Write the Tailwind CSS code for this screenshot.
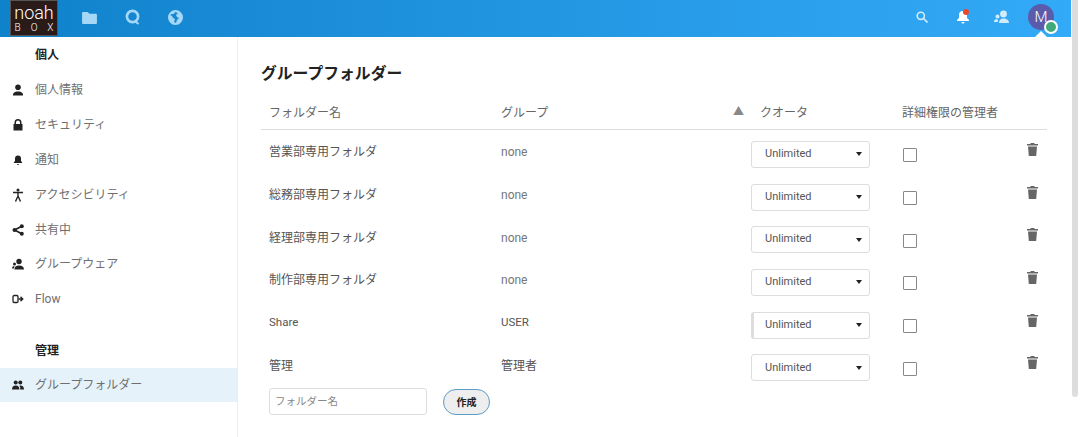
<!DOCTYPE html>
<html lang="ja">
<head>
  <meta charset="UTF-8" />
  <title>グループフォルダー</title>
  <script src="https://cdn.jsdelivr.net/npm/@tailwindcss/browser@4"></script>
</head>
<body class="w-[1080px] h-[437px] overflow-hidden flex bg-white font-['Roboto','Noto_Sans_CJK_JP',sans-serif] text-[12px] text-[#555]">

  <div class="w-[1071px] shrink-0">
    <!-- Header -->
    <header class="h-[37px] flex justify-between bg-gradient-to-r from-[#0f82cc] to-[#33aaf7]">
      <div class="flex items-center">
        <div class="ml-[10px] w-[48px] h-[36px] self-start bg-[#2a1a18] border border-[#555] flex flex-col items-center text-white">
          <span class="h-[16px] mt-[4px] text-[18px] leading-[16px] font-light">noah</span>
          <span class="h-[10px] mt-[2px] ml-[10px] text-[10px] leading-[10px] tracking-[10px] font-light">BOX</span>
        </div>
        <div class="flex items-center gap-[28px] ml-[24px] pb-[3px] text-[#a5d8f7]">
          <svg width="15" height="13" viewBox="0 0 16 14" fill="currentColor"><path d="M1 1h5l2 2h7a1 1 0 0 1 1 1v9a1 1 0 0 1-1 1H1a1 1 0 0 1-1-1V2a1 1 0 0 1 1-1z"/></svg>
          <svg width="15" height="16" viewBox="0 0 15 16" fill="none" stroke="currentColor" stroke-width="2.6"><circle cx="7.5" cy="7.5" r="5.6"/><path d="M10.5 12.5l3 2.5" stroke-width="2"/></svg>
          <svg width="15" height="15" viewBox="0 0 15 15" fill="currentColor"><path fill-rule="evenodd" d="M7.5 0a7.5 7.5 0 1 1 0 15a7.5 7.5 0 0 1 0-15zM2 5l2 1 1 2 2 1-1 3 2 1 1-3 2-2-2-1-1-2 2-2-3-1-1 2-2 0z"/></svg>
        </div>
      </div>
      <div class="flex items-center pb-[3px] text-[#d3ecfc]">
        <svg class="mr-[29px]" width="12" height="12" viewBox="0 0 12 12" fill="none" stroke="currentColor" stroke-width="1.6"><circle cx="4.8" cy="4.8" r="3.6"/><path d="M7.5 7.5L11.5 11.5"/></svg>
        <div class="relative mr-[25px] text-white">
          <svg class="block" width="12" height="14" viewBox="0 0 12 14" fill="currentColor"><path d="M6 1a4 4 0 0 1 4 4v3l2 2v1H0v-1l2-2V5a4 4 0 0 1 4-4zM4.5 12h3a1.5 1.5 0 0 1-3 0z"/></svg>
          <span class="absolute -top-[1px] left-[6px] w-[6px] h-[6px] rounded-full bg-[#e9482c]"></span>
        </div>
        <svg class="mr-[19px]" width="15" height="14" viewBox="0 0 15 14" fill="currentColor"><circle cx="9.5" cy="4" r="3.4"/><path d="M5 13c0-3 1.5-4.5 4.5-4.5S15 10 15 13z"/><circle cx="3.5" cy="6.5" r="2"/><path d="M0 12c0-2 1-3 3.5-3l.5 3z"/></svg>
        <div class="relative mr-[17px] w-[26px] h-[26px] rounded-full bg-[#5b5bab] flex items-center justify-center text-white text-[15px] font-light">
          M
          <span class="absolute -right-[4px] -bottom-[4px] w-[14px] h-[14px] rounded-full bg-[#41a97a] border-2 border-white"></span>
          <span class="absolute left-[7px] -bottom-[7px] w-0 h-0 border-x-[6px] border-x-transparent border-b-[6px] border-b-white"></span>
        </div>
      </div>
    </header>

    <div class="flex h-[400px]">
      <!-- Sidebar -->
      <aside class="w-[238px] shrink-0 border-r border-[#eee] text-[#6f6f6f]">
        <h3 class="h-[36px] pl-[35px] pt-[9px] font-bold text-[#222]">個人</h3>
        <nav>
          <a class="h-[34.8px] flex items-center">
            <svg class="ml-[12px] w-[12px]" viewBox="0 0 12 12" fill="#222" height="12"><circle cx="6" cy="3.2" r="2.8"/><path d="M1 11.5V10c1-2 3-2.5 5-2.5s4 .5 5 2.5v1.5z"/></svg>
            <span class="ml-[11px]">個人情報</span>
          </a>
          <a class="h-[34.8px] flex items-center">
            <svg class="ml-[12px] w-[12px]" viewBox="0 0 12 12" fill="#222" height="12"><path d="M1.5 5h1V3.5a3.5 3.5 0 0 1 7 0V5h1v6.5h-9zM4 5h4V3.5a2 2 0 0 0-4 0z"/></svg>
            <span class="ml-[11px]">セキュリティ</span>
          </a>
          <a class="h-[34.8px] flex items-center">
            <svg class="ml-[12px] w-[12px]" viewBox="0 0 12 12" fill="#222" height="12"><path d="M6 1.500a3 3 0 0 1 3 3V7l1.200 1.500v.5H1.800v-.5L3 7V4.500a3 3 0 0 1 3-3zM5 10h2a1 1 0 0 1-2 0z"/></svg>
            <span class="ml-[11px]">通知</span>
          </a>
          <a class="h-[34.8px] flex items-center">
            <svg class="ml-[12px] w-[12px]" viewBox="0 0 12 14" fill="none" stroke="#222" stroke-width="1.4" height="14"><circle cx="6" cy="2" r="1.5" fill="#222" stroke="none"/><path d="M1 4.500h10M6 4.500v4M6 8l-2.500 5.500M6 8l2.500 5.500"/></svg>
            <span class="ml-[11px]">アクセシビリティ</span>
          </a>
          <a class="h-[34.8px] flex items-center">
            <svg class="ml-[12px] w-[12px]" viewBox="0 0 12 12" fill="#222" stroke="#222" height="12"><circle cx="2.500" cy="6" r="2" stroke="none"/><circle cx="9.800" cy="2.200" r="2" stroke="none"/><circle cx="9.800" cy="9.800" r="2" stroke="none"/><path d="M9.800 2.200L2.500 6l7.300 3.800" fill="none" stroke-width="1.700"/></svg>
            <span class="ml-[11px]">共有中</span>
          </a>
          <a class="h-[34.8px] flex items-center">
            <svg class="ml-[12px] w-[12px]" viewBox="0 0 12 12" fill="#222" height="12"><circle cx="7" cy="3.500" r="2.700"/><path d="M2.500 11.500c0-2.500 1.500-4 4.500-4s5 1.500 5 4z"/><circle cx="2.500" cy="6" r="1.500"/><path d="M0 10.500c0-1.500.7-2.500 2.500-2.500l-.5 2.500z"/></svg>
            <span class="ml-[11px]">グループウェア</span>
          </a>
          <a class="h-[34.8px] flex items-center">
            <svg class="ml-[12px] w-[12px]" viewBox="0 0 12 10" fill="none" stroke="#222" stroke-width="1.300" height="10"><rect x="1" y="1.500" width="5" height="7" rx="1.200"/><path d="M6.500 5h4M8.500 2.800L10.800 5 8.500 7.200"/></svg>
            <span class="ml-[11px]">Flow</span>
          </a>
        </nav>
        <h3 class="h-[35px] mt-[16.4px] pl-[35px] pt-[9px] font-bold text-[#222]">管理</h3>
        <a class="h-[34px] flex items-center bg-[#e5f2fa]">
          <svg class="ml-[12px] w-[12px]" viewBox="0 0 12 10" fill="#222" height="10"><circle cx="3.700" cy="2.500" r="2"/><circle cx="8.300" cy="2.500" r="2"/><path d="M0 9.500c0-2.500 1.300-4 3.700-4s3.700 1.500 3.700 4z"/><path d="M8 9.500h4c0-2.500-1.300-4-3.700-4l-1 .3c1 .8 1.300 2 .7 3.700z"/></svg>
          <span class="ml-[11px]">グループフォルダー</span>
        </a>
      </aside>

      <!-- Main -->
      <main class="flex-1 pl-[23px] pr-[24px]">
        <h2 class="pt-[25px] h-[59px] font-bold text-[15.8px] text-[#222]">グループフォルダー</h2>
        <div class="grid grid-cols-[232px_240px_19px_150px_1fr] h-[34px] items-center border-b border-[#ddd] text-[#666]">
          <span class="pl-[8px]">フォルダー名</span>
          <span class="pl-[8px]">グループ</span>
          <span class="text-[#888] text-[11px]">▲</span>
          <span class="pl-[8px]">クオータ</span>
          <span>詳細権限の管理者</span>
        </div>

        <div class="pt-[3px]">
          <div class="grid grid-cols-[232px_258px_152px_124px_1fr] items-center h-[42.7px]">
            <span class="pl-[8px] -mt-[4px] text-[#555]">営業部専用フォルダ</span>
            <span class="pl-[8px] -mt-[4px] text-[#777]">none</span>
            <div class="w-[119px] h-[27px] pl-[13px] pr-[7px] flex items-center justify-between bg-white border border-[#ddd] rounded-[3px] text-[11px]">Unlimited<span class="border-x-[3.5px] border-x-transparent border-t-[4px] border-t-[#222]"></span></div>
            <span class="w-[14px] h-[14px] mt-[2px] border border-[#888] rounded-[1px]"></span>
            <svg class="-mt-[10px]" width="11" height="13" viewBox="0 0 11 13" fill="#666"><path d="M3.500 1V0h4v1H11v1.500H0V1zM1 3.500h9l-.8 9.500H1.800z"/></svg>
          </div>
          <div class="grid grid-cols-[232px_258px_152px_124px_1fr] items-center h-[42.7px]">
            <span class="pl-[8px] -mt-[4px] text-[#555]">総務部専用フォルダ</span>
            <span class="pl-[8px] -mt-[4px] text-[#777]">none</span>
            <div class="w-[119px] h-[27px] pl-[13px] pr-[7px] flex items-center justify-between bg-white border border-[#ddd] rounded-[3px] text-[11px]">Unlimited<span class="border-x-[3.5px] border-x-transparent border-t-[4px] border-t-[#222]"></span></div>
            <span class="w-[14px] h-[14px] mt-[2px] border border-[#888] rounded-[1px]"></span>
            <svg class="-mt-[10px]" width="11" height="13" viewBox="0 0 11 13" fill="#666"><path d="M3.500 1V0h4v1H11v1.500H0V1zM1 3.500h9l-.8 9.500H1.800z"/></svg>
          </div>
          <div class="grid grid-cols-[232px_258px_152px_124px_1fr] items-center h-[42.7px]">
            <span class="pl-[8px] -mt-[4px] text-[#555]">経理部専用フォルダ</span>
            <span class="pl-[8px] -mt-[4px] text-[#777]">none</span>
            <div class="w-[119px] h-[27px] pl-[13px] pr-[7px] flex items-center justify-between bg-white border border-[#ddd] rounded-[3px] text-[11px]">Unlimited<span class="border-x-[3.5px] border-x-transparent border-t-[4px] border-t-[#222]"></span></div>
            <span class="w-[14px] h-[14px] mt-[2px] border border-[#888] rounded-[1px]"></span>
            <svg class="-mt-[10px]" width="11" height="13" viewBox="0 0 11 13" fill="#666"><path d="M3.500 1V0h4v1H11v1.500H0V1zM1 3.500h9l-.8 9.500H1.800z"/></svg>
          </div>
          <div class="grid grid-cols-[232px_258px_152px_124px_1fr] items-center h-[42.7px]">
            <span class="pl-[8px] -mt-[4px] text-[#555]">制作部専用フォルダ</span>
            <span class="pl-[8px] -mt-[4px] text-[#777]">none</span>
            <div class="w-[119px] h-[27px] pl-[13px] pr-[7px] flex items-center justify-between bg-white border border-[#ddd] rounded-[3px] text-[11px]">Unlimited<span class="border-x-[3.5px] border-x-transparent border-t-[4px] border-t-[#222]"></span></div>
            <span class="w-[14px] h-[14px] mt-[2px] border border-[#888] rounded-[1px]"></span>
            <svg class="-mt-[10px]" width="11" height="13" viewBox="0 0 11 13" fill="#666"><path d="M3.500 1V0h4v1H11v1.500H0V1zM1 3.500h9l-.8 9.500H1.800z"/></svg>
          </div>
          <div class="grid grid-cols-[232px_258px_152px_124px_1fr] items-center h-[42.7px]">
            <span class="pl-[8px] -mt-[4px] text-[11.5px] text-[#555]">Share</span>
            <span class="pl-[8px] -mt-[4px] text-[11.5px] text-[#555]">USER</span>
            <div class="w-[119px] h-[27px] pl-[11px] pr-[7px] flex items-center justify-between bg-white border border-[#ddd] border-l-[3px] rounded-[3px] text-[11px]">Unlimited<span class="border-x-[3.5px] border-x-transparent border-t-[4px] border-t-[#222]"></span></div>
            <span class="w-[14px] h-[14px] mt-[2px] border border-[#888] rounded-[1px]"></span>
            <svg class="-mt-[10px]" width="11" height="13" viewBox="0 0 11 13" fill="#666"><path d="M3.500 1V0h4v1H11v1.500H0V1zM1 3.500h9l-.8 9.500H1.800z"/></svg>
          </div>
          <div class="grid grid-cols-[232px_258px_152px_124px_1fr] items-center h-[42.7px]">
            <span class="pl-[8px] -mt-[4px] text-[#555]">管理</span>
            <span class="pl-[8px] -mt-[4px] text-[#555]">管理者</span>
            <div class="w-[119px] h-[27px] pl-[13px] pr-[7px] flex items-center justify-between bg-white border border-[#ddd] rounded-[3px] text-[11px]">Unlimited<span class="border-x-[3.5px] border-x-transparent border-t-[4px] border-t-[#222]"></span></div>
            <span class="w-[14px] h-[14px] mt-[2px] border border-[#888] rounded-[1px]"></span>
            <svg class="-mt-[10px]" width="11" height="13" viewBox="0 0 11 13" fill="#666"><path d="M3.500 1V0h4v1H11v1.500H0V1zM1 3.500h9l-.8 9.500H1.800z"/></svg>
          </div>
        </div>

        <div class="flex items-start ml-[8px] gap-[16px] -mt-[1px]">
          <div class="w-[158px] h-[27px] pl-[5px] flex items-center border border-[#ddd] rounded-[3px] text-[10.5px] text-[#888]">フォルダー名</div>
          <button class="w-[47px] h-[26px] mt-[1px] rounded-full bg-[#eee] border border-[#5d9cc4] font-bold text-[10px] text-[#222]">作成</button>
        </div>
      </main>
    </div>
  </div>

  <!-- Scrollbar -->
  <div class="ml-[1px] w-[6px] h-[397px] bg-[#ddd] rounded-b-[3px]"></div>
</body>
</html>
